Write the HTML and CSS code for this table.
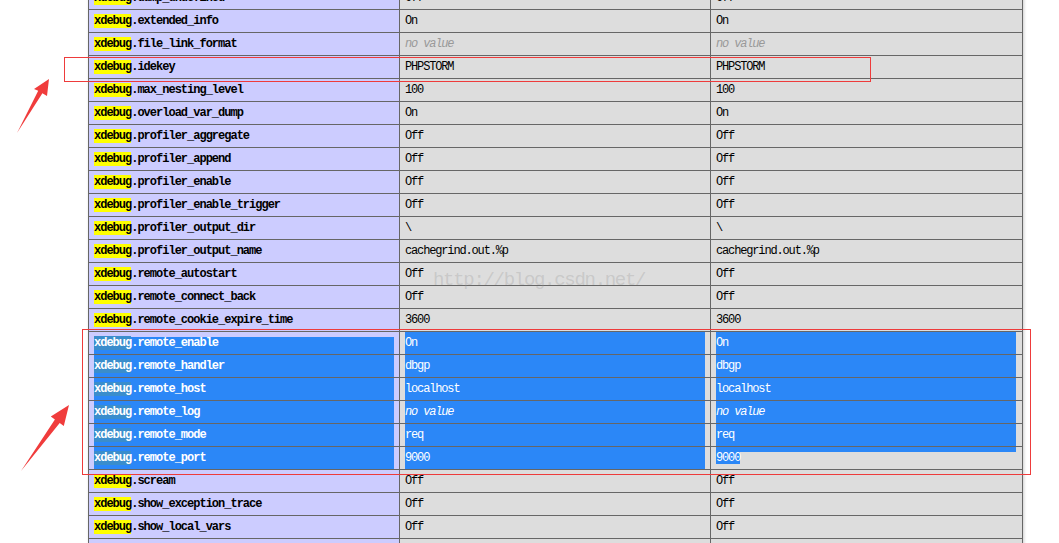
FILE: index.html
```html
<!DOCTYPE html>
<html>
<head>
<meta charset="utf-8">
<link rel="stylesheet" href="styles.css">
</head>
<body>
<div class="page">
  <table class="info">
    <colgroup><col class="c1"><col class="c2"><col class="c3"></colgroup>
    <tr><td class="e"><span class="hl">xdebug</span>.dump_undefined</td><td class="v">Off</td><td class="v">Off</td></tr>
    <tr><td class="e"><span class="hl">xdebug</span>.extended_info</td><td class="v">On</td><td class="v">On</td></tr>
    <tr><td class="e"><span class="hl">xdebug</span>.file_link_format</td><td class="v"><i>no value</i></td><td class="v"><i>no value</i></td></tr>
    <tr><td class="e"><span class="hl">xdebug</span>.idekey</td><td class="v">PHPSTORM</td><td class="v">PHPSTORM</td></tr>
    <tr><td class="e"><span class="hl">xdebug</span>.max_nesting_level</td><td class="v">100</td><td class="v">100</td></tr>
    <tr><td class="e"><span class="hl">xdebug</span>.overload_var_dump</td><td class="v">On</td><td class="v">On</td></tr>
    <tr><td class="e"><span class="hl">xdebug</span>.profiler_aggregate</td><td class="v">Off</td><td class="v">Off</td></tr>
    <tr><td class="e"><span class="hl">xdebug</span>.profiler_append</td><td class="v">Off</td><td class="v">Off</td></tr>
    <tr><td class="e"><span class="hl">xdebug</span>.profiler_enable</td><td class="v">Off</td><td class="v">Off</td></tr>
    <tr><td class="e"><span class="hl">xdebug</span>.profiler_enable_trigger</td><td class="v">Off</td><td class="v">Off</td></tr>
    <tr><td class="e"><span class="hl">xdebug</span>.profiler_output_dir</td><td class="v">\</td><td class="v">\</td></tr>
    <tr><td class="e"><span class="hl">xdebug</span>.profiler_output_name</td><td class="v">cachegrind.out.%p</td><td class="v">cachegrind.out.%p</td></tr>
    <tr><td class="e"><span class="hl">xdebug</span>.remote_autostart</td><td class="v">Off</td><td class="v">Off</td></tr>
    <tr><td class="e"><span class="hl">xdebug</span>.remote_connect_back</td><td class="v">Off</td><td class="v">Off</td></tr>
    <tr><td class="e"><span class="hl">xdebug</span>.remote_cookie_expire_time</td><td class="v">3600</td><td class="v">3600</td></tr>
    <tr class="sel first"><td class="e"><span class="hl">xdebug</span>.remote_enable</td><td class="v">On</td><td class="v">On</td></tr>
    <tr class="sel"><td class="e"><span class="hl">xdebug</span>.remote_handler</td><td class="v">dbgp</td><td class="v">dbgp</td></tr>
    <tr class="sel"><td class="e"><span class="hl">xdebug</span>.remote_host</td><td class="v">localhost</td><td class="v">localhost</td></tr>
    <tr class="sel"><td class="e"><span class="hl">xdebug</span>.remote_log</td><td class="v"><i>no value</i></td><td class="v"><i>no value</i></td></tr>
    <tr class="sel"><td class="e"><span class="hl">xdebug</span>.remote_mode</td><td class="v">req</td><td class="v">req</td></tr>
    <tr class="sel last"><td class="e"><span class="hl">xdebug</span>.remote_port</td><td class="v">9000</td><td class="v end"><span class="tsel">9000</span></td></tr>
    <tr><td class="e"><span class="hl">xdebug</span>.scream</td><td class="v">Off</td><td class="v">Off</td></tr>
    <tr><td class="e"><span class="hl">xdebug</span>.show_exception_trace</td><td class="v">Off</td><td class="v">Off</td></tr>
    <tr><td class="e"><span class="hl">xdebug</span>.show_local_vars</td><td class="v">Off</td><td class="v">Off</td></tr>
    <tr><td class="e"><span class="hl">xdebug</span>.show_mem_delta</td><td class="v">Off</td><td class="v">Off</td></tr>
  </table>

  <div class="watermark">http://blog.csdn.net/</div>
  <div class="mark mark-1"></div>
  <div class="mark mark-2"></div>
  <svg class="arrows" width="1059" height="543" viewBox="0 0 1059 543">
    <polygon points="17,133 38.2,90.8 34,89 49,79 47,96 42.4,93.3" fill="#f03c3c"/>
    <polygon points="21,471 54.9,419.5 50.8,416.5 69,405 63.8,425.9 59.7,422.9" fill="#f03c3c"/>
  </svg>
</div>
</body>
</html>
```

FILE: styles.css
```css
html, body {
  margin: 0;
  padding: 0;
  overflow: hidden;
  background: #fff;
}

.page {
  position: relative;
  width: 1059px;
  height: 543px;
  padding-left: 88px;
  box-sizing: border-box;
  overflow: hidden;
}

.info {
  border-collapse: collapse;
  border: 0;
  width: 934px;
  table-layout: fixed;
  margin-top: -14px;
  box-shadow: 1px 2px 3px #ccc;
  font-family: "Liberation Mono", "DejaVu Sans Mono", monospace;
  font-size: 12px;
  line-height: 14px;
}

.c1 { width: 311px; }
.c2 { width: 311px; }
.c3 { width: 312px; }

.info td {
  border: 1px solid #666;
  padding: 4px 5px;
  height: 14px;
  vertical-align: middle;
  white-space: nowrap;
  overflow: hidden;
  color: #000;
}

.e {
  background-color: #ccf;
  font-weight: bold;
  letter-spacing: -1px;
  color: #111;
}

.v {
  background-color: #ddd;
  letter-spacing: -1.15px;
}

.v i {
  color: #999;
}

.hl {
  background: #ff0;
}

/* selection */
.sel td {
  color: #fff;
  position: relative;
}

.sel .e {
  background: linear-gradient(#2b87f7, #2b87f7) 5px 0 / 300px 100% no-repeat, #ccf;
}

.sel.first .e {
  background-position: 5px 5px;
}

.sel:not(.first) .e::before {
  content: "";
  position: absolute;
  left: 5px;
  top: -1px;
  width: 300px;
  height: 1px;
  background: #1f6fd6;
}

.sel .e .hl {
  background: #3a8dcc;
}

.sel .v {
  background: linear-gradient(#2b87f7, #2b87f7) 5px 0 / 300px 100% no-repeat, #ddd;
}

.sel .v i {
  color: #fff;
}

.sel .v.end {
  background: linear-gradient(#2b87f7, #2b87f7) 5px 0 / 300px 5px no-repeat, #ddd;
}

.tsel {
  display: inline-block;
  background: #2b87f7;
  color: #fff;
  line-height: 12px;
  vertical-align: middle;
}

/* annotations */
.watermark {
  position: absolute;
  left: 433px;
  top: 271px;
  font-family: "Liberation Mono", monospace;
  font-size: 19px;
  line-height: 19px;
  letter-spacing: -1.3px;
  color: rgba(150, 150, 150, 0.3);
  pointer-events: none;
}

.mark {
  position: absolute;
  border: 1px solid #ee3b3b;
  box-sizing: border-box;
}

.mark-1 {
  left: 64px;
  top: 57px;
  width: 807px;
  height: 25px;
}

.mark-2 {
  left: 82px;
  top: 329px;
  width: 949px;
  height: 146px;
}

.arrows {
  position: absolute;
  left: 0;
  top: 0;
}
```
